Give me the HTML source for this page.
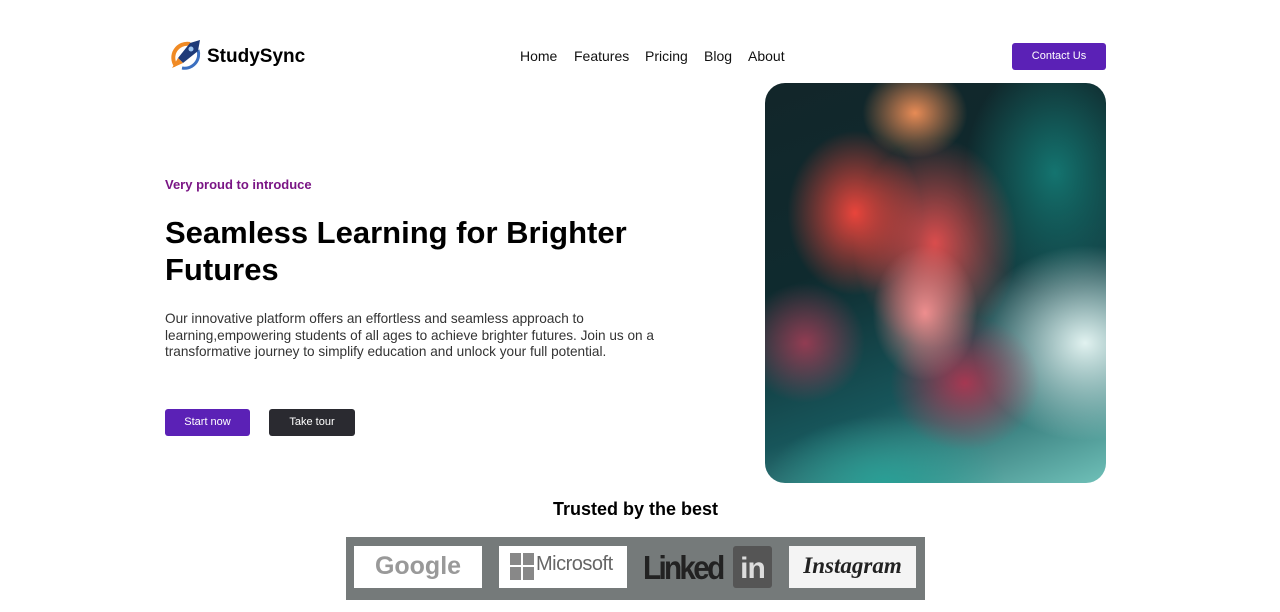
<!DOCTYPE html>
<html><head><style>
*{margin:0;padding:0;box-sizing:border-box}
body{width:1280px;height:612px;background:#fff;font-family:"Liberation Sans",sans-serif;position:relative;overflow:hidden;color:#000}
.abs{position:absolute}
.nav a{position:absolute;top:48px;font-size:14px;color:#111;text-decoration:none}
.btn{position:absolute;color:#fff;font-size:11px;text-align:center;border-radius:3px}
.img{left:765px;top:83px;width:341px;height:400px;border-radius:20px;overflow:hidden;
background:
radial-gradient(ellipse 70px 90px at 160px 230px,rgba(255,150,150,.9),transparent 75%),
radial-gradient(ellipse 90px 110px at 90px 130px,rgba(245,70,60,.95),transparent 75%),
radial-gradient(ellipse 110px 140px at 170px 160px,rgba(240,80,80,.9),transparent 75%),
radial-gradient(ellipse 100px 90px at 200px 300px,rgba(190,50,80,.85),transparent 75%),
radial-gradient(ellipse 70px 60px at 150px 30px,rgba(255,150,90,.9),transparent 75%),
radial-gradient(ellipse 80px 80px at 40px 260px,rgba(200,60,90,.7),transparent 75%),
radial-gradient(ellipse 150px 130px at 320px 260px,rgba(225,242,240,1),transparent 75%),
radial-gradient(ellipse 160px 90px at 120px 400px,rgba(40,160,150,.95),transparent 75%),
radial-gradient(ellipse 120px 160px at 290px 90px,rgba(20,120,115,.95),transparent 75%),
linear-gradient(160deg,#12262a,#0f2a2e 40%,#17555a 70%,#6fc0b8);}
</style></head><body>
<svg class="abs" style="left:168px;top:38px" width="36" height="34" viewBox="0 0 36 34">
<path d="M8 28 A14 14 0 0 1 22 6" stroke="#f08a24" stroke-width="4" fill="none"/>
<path d="M30 12 A14 14 0 0 1 14 30" stroke="#3b6fc0" stroke-width="3" fill="none"/>
<path d="M32 2 L22 5 L10 20 L15 25 L30 13 Z" fill="#1e3a78"/>
<path d="M10 20 L4 30 L15 25Z" fill="#f08a24"/>
<circle cx="23" cy="11" r="2.5" fill="#9cc4f0"/>
</svg>
<div class="abs" style="left:207px;top:46px;font-size:19px;font-weight:bold">StudySync</div>
<div class="nav"><a style="left:520px">Home</a><a style="left:574px">Features</a><a style="left:645px">Pricing</a><a style="left:704px">Blog</a><a style="left:748px">About</a></div>
<div class="btn" style="left:1012px;top:43px;width:94px;height:27px;line-height:27px;background:#5b21b6">Contact Us</div>
<div class="abs" style="left:165px;top:177px;font-size:13px;font-weight:bold;color:#7a1585">Very proud to introduce</div>
<div class="abs" style="left:165px;top:214px;font-size:31px;font-weight:bold;line-height:37px;width:520px">Seamless Learning for Brighter Futures</div>
<div class="abs" style="left:165px;top:311px;font-size:13.6px;line-height:16.5px;color:#333;width:495px">Our innovative platform offers an effortless and seamless approach to learning,empowering students of all ages to achieve brighter futures. Join us on a transformative journey to simplify education and unlock your full potential.</div>
<div class="btn" style="left:165px;top:409px;width:85px;height:27px;line-height:27px;background:#5b21b6">Start now</div>
<div class="btn" style="left:269px;top:409px;width:86px;height:27px;line-height:27px;background:#2a2a30">Take tour</div>
<div class="abs img"></div>
<div class="abs" style="left:0;width:1271px;top:499px;text-align:center;font-size:18px;font-weight:bold">Trusted by the best</div>
<div class="abs" style="left:346px;top:537px;width:579px;height:63px;background:#757a7a"></div>
<div class="abs" style="left:354px;top:546px;width:128px;height:42px;background:#fff;color:#999;font-size:25px;font-weight:bold;text-align:center;line-height:40px">Google</div>
<div class="abs" style="left:499px;top:546px;width:128px;height:42px;background:#fff"></div>
<div class="abs" style="left:510px;top:553px;width:24px;height:27px;background:#888"></div>
<div class="abs" style="left:521px;top:553px;width:2px;height:27px;background:#fff"></div>
<div class="abs" style="left:510px;top:565px;width:24px;height:2px;background:#fff"></div>
<div class="abs" style="left:536px;top:553px;font-size:20px;color:#666;letter-spacing:-0.5px">Microsoft</div>
<div class="abs" style="left:643px;top:546px;font-size:33px;font-weight:bold;color:#222;letter-spacing:-3px;line-height:44px;transform:scaleX(.9);transform-origin:left">Linked</div>
<div class="abs" style="left:733px;top:546px;width:39px;height:42px;background:#555;border-radius:3px;color:#ddd;font-size:30px;font-weight:bold;line-height:46px;text-align:center;letter-spacing:-1px">in</div>
<div class="abs" style="left:789px;top:546px;width:127px;height:42px;background:#f4f4f4;color:#222;font-family:'Liberation Serif',serif;font-style:italic;font-weight:bold;font-size:23px;text-align:center;line-height:40px">Instagram</div>
</body></html>
